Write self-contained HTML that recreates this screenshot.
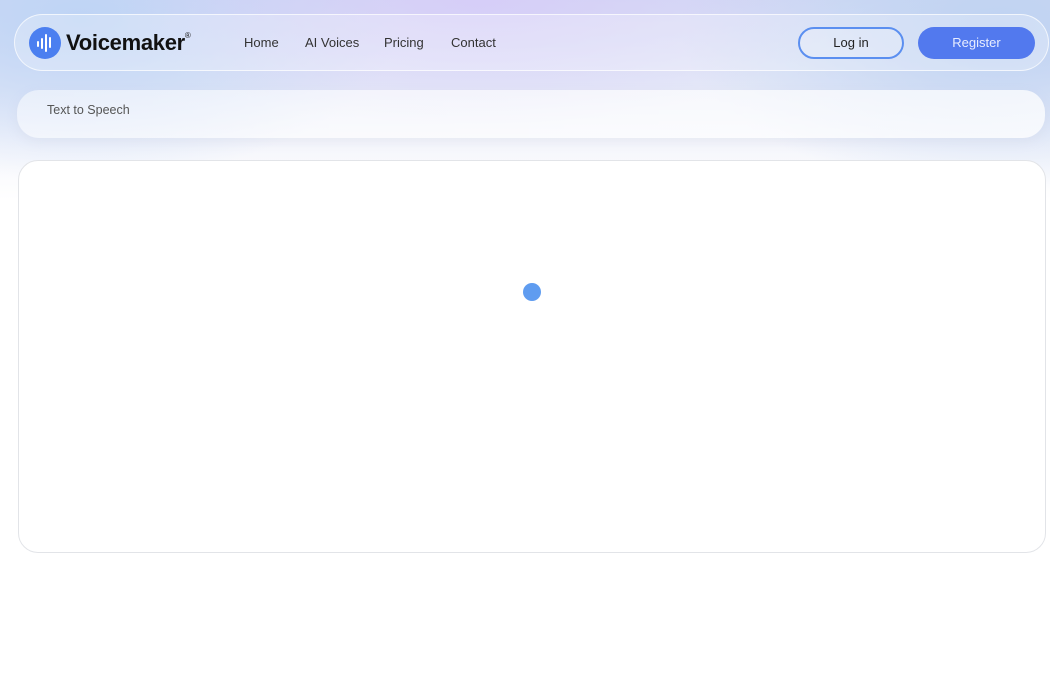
<!DOCTYPE html>
<html><head><meta charset="utf-8"><style>
*{margin:0;padding:0;box-sizing:border-box}
body{width:1050px;height:700px;overflow:hidden;font-family:"Liberation Sans","DejaVu Sans",sans-serif;background:#fff;position:relative}
.bg{position:absolute;left:0;top:0;width:1050px;height:260px;
background:radial-gradient(ellipse 520px 180px at 480px 0px,rgba(214,204,248,.9),rgba(214,204,248,0) 70%),
radial-gradient(ellipse 400px 200px at 80px 20px,rgba(190,212,245,1),rgba(190,212,245,0) 80%),
radial-gradient(ellipse 400px 200px at 1000px 30px,rgba(190,210,242,1),rgba(190,210,242,0) 80%),
linear-gradient(#d4dcf4 0,#e6eaf8 90px,#f6f7fc 150px,#fff 200px)}
.nav{position:absolute;left:14px;top:14px;width:1035px;height:57px;border-radius:29px;border:1px solid rgba(255,255,255,.7);background:rgba(255,255,255,.25)}
.logo{position:absolute;left:29px;top:27px;width:32px;height:32px;border-radius:50%;background:#4b7ff0}
.brand{position:absolute;left:66px;top:30px;font-size:22px;font-weight:bold;color:#111;letter-spacing:-.3px}
.brand sup{font-size:8px;font-weight:normal;position:relative;top:-4px}
.link{position:absolute;top:35px;font-size:13px;color:#333}
.btn{position:absolute;top:27px;height:32px;border-radius:16px;font-size:13px;text-align:center;line-height:32px}
.bc{position:absolute;left:17px;top:90px;width:1028px;height:48px;border-radius:22px;background:linear-gradient(90deg,rgba(255,255,255,.5),rgba(255,255,255,.75));box-shadow:0 4px 10px rgba(200,205,225,.25)}
.card{position:absolute;left:18px;top:160px;width:1028px;height:393px;border:1px solid #e2e4e8;border-radius:20px;background:#fff}
.dot{position:absolute;left:523px;top:283px;width:18px;height:18px;border-radius:50%;background:#5f9cf0}
</style></head><body>
<div class="bg"></div>
<div class="nav"></div>
<div class="logo"><svg width="32" height="32" viewBox="0 0 32 32"><g stroke="#fff" stroke-width="2" stroke-linecap="round"><line x1="9" y1="15" x2="9" y2="19"/><line x1="13" y1="12" x2="13" y2="21"/><line x1="17" y1="8" x2="17" y2="24"/><line x1="21" y1="11" x2="21" y2="20"/></g></svg></div>
<div class="brand">Voicemaker<sup>®</sup></div>
<div class="link" style="left:244px">Home</div>
<div class="link" style="left:305px">AI Voices</div>
<div class="link" style="left:384px">Pricing</div>
<div class="link" style="left:451px">Contact</div>
<div class="btn" style="left:798px;width:106px;border:2px solid #5b8ff0;color:#222;line-height:28px;background:rgba(255,255,255,.2)">Log in</div>
<div class="btn" style="left:918px;width:117px;background:#5279ee;color:#e8edff">Register</div>
<div class="bc"></div>
<div style="position:absolute;left:47px;top:103px;font-size:12.5px;color:#555">Text to Speech</div>
<div class="card"></div>
<div class="dot"></div>
</body></html>
